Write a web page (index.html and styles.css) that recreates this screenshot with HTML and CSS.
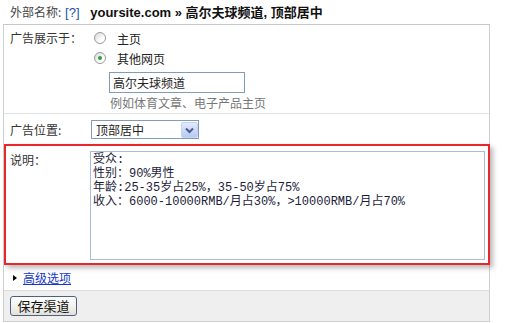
FILE: index.html
```html
<!DOCTYPE html>
<html lang="zh">
<head>
    <meta charset="UTF-8"/>
    <title>渠道设置</title>
<link rel="stylesheet" href="styles.css">
</head>
<body>
    <div class="page">
        <!-- channel name -->
        <div class="head">
            <span class="head-label">外部名称:</span>
            <a class="help" href="#">[?]</a>
            <b class="head-name">yoursite.com » 高尔夫球频道, 顶部居中</b>
        </div>

        <div class="panel">
            <!-- where the ad shows -->
            <div class="row row-show">
                <div class="label">广告展示于：</div>
                <div class="field">
                    <div class="option"><span class="radio"></span>主页</div>
                    <div class="option"><span class="radio checked"></span>其他网页</div>
                    <div class="text-box">高尔夫球频道</div>
                    <div class="hint">例如体育文章、电子产品主页</div>
                </div>
            </div>

            <!-- placement -->
            <div class="row row-place">
                <div class="label">广告位置:</div>
                <div class="field">
                    <div class="select">
                        <span class="select-text">顶部居中</span>
                        <span class="select-btn">
                            <svg width="15" height="14" viewBox="0 0 15 14"><path d="M4 5.5 L7.5 9 L11 5.5" fill="none" stroke="#4a5f8e" stroke-width="2"/></svg>
                        </span>
                    </div>
                </div>
            </div>

            <!-- description, highlighted -->
            <div class="row row-desc">
                <div class="label">说明：</div>
                <div class="textarea">受众:<br>性别：90%男性<br>年龄:25-35岁占25%，35-50岁占75%<br>收入：6000-10000RMB/月占30%，&gt;10000RMB/月占70%</div>
            </div>

            <div class="row row-more">
                <span class="arrow"></span>
                <a class="more-link" href="#">高级选项</a>
            </div>

            <div class="footer">
                <span class="button">保存渠道</span>
            </div>
        </div>
    </div>
</body>
</html>
```

FILE: styles.css
```css
* {
    margin: 0;
    padding: 0;
    box-sizing: border-box;
}

body {
    background: #fff;
    color: #333;
    font: 12px "Noto Sans CJK SC", sans-serif;
}

.page {
    width: 492px;
}

/* Header line */
.head {
    height: 24px;
    line-height: 24px;
    padding-left: 10px;
    white-space: nowrap;
}

.head-label {
    color: #444;
}

.help {
    color: #2255aa;
    text-decoration: none;
    margin-left: 1px;
    font-family: "Liberation Sans", sans-serif;
    font-size: 13px;
}

.head-name {
    margin-left: 8px;
    color: #111;
    font: bold 13px "Liberation Sans", "Noto Sans CJK SC", sans-serif;
}

/* Panel */
.panel {
    margin-left: 3px;
    width: 487px;
    border: 1px solid #cfcfcf;
    border-top-color: #c8c8c8;
}

.row {
    display: flex;
}

.label {
    width: 86px;
    padding-left: 6px;
    line-height: 20px;
    color: #333;
}

.row-show {
    padding: 3px 0 2px;
    border-bottom: 1px solid #e2e2e2;
}

.option {
    display: flex;
    align-items: center;
    height: 20px;
    color: #222;
}

/* XP-like radio */
.radio {
    width: 12px;
    height: 12px;
    margin: 0 11px 0 4px;
    border: 1px solid #9a9a9a;
    border-radius: 50%;
    background: linear-gradient(135deg, #d8d8d8, #fff 70%);
    display: flex;
    align-items: center;
    justify-content: center;
}

.radio.checked::after {
    content: "";
    width: 4px;
    height: 4px;
    border-radius: 50%;
    background: #31a03a;
}

.text-box {
    width: 136px;
    height: 21px;
    margin: 4px 0 0 19px;
    padding-left: 3px;
    border: 1px solid #7f9db9;
    line-height: 19px;
    color: #222;
}

.hint {
    margin: 2px 0 0 20px;
    line-height: 16px;
    color: #777;
}

.row-place {
    height: 30px;
    padding-top: 6px;
}

.row-place .label {
    line-height: 19px;
}

.select {
    width: 108px;
    height: 19px;
    margin-left: 1px;
    border: 1px solid #7f9db9;
    display: flex;
    align-items: center;
    justify-content: space-between;
}

.select-text {
    padding-left: 4px;
    color: #222;
}

.select-btn {
    width: 17px;
    height: 16px;
    margin-right: 0;
    border: 1px solid #c5d4f5;
    border-radius: 2px;
    background: linear-gradient(#e1e9fb, #b8caf3);
    display: flex;
    align-items: center;
    justify-content: center;
}

/* Highlighted description row */
.row-desc {
    margin-right: -1px;
    height: 121px;
    padding: 5px 3px 4px 0;
    border: 2px solid #e8262c;
    background: #fff;
    box-shadow: 3px 3px 5px rgba(0, 0, 0, 0.28);
    position: relative;
}

.row-desc .label {
    width: 84px;
    padding-left: 4px;
    line-height: 18px;
}

.textarea {
    flex: 1;
    height: 109px;
    padding: 1px 2px;
    border: 1px solid #a9bcd9;
    font: 12px "Liberation Mono", "Noto Sans CJK SC", monospace;
    line-height: 14px;
    color: #1d1d3a;
    white-space: nowrap;
}

.row-more {
    height: 26px;
    align-items: center;
    padding: 1px 0 0 9px;
    border-bottom: 1px solid #dcdcdc;
}

.arrow {
    width: 0;
    height: 0;
    border-left: 4px solid #000;
    border-top: 3.5px solid transparent;
    border-bottom: 3.5px solid transparent;
    margin-right: 6px;
}

.more-link {
    color: #1638c8;
    line-height: 16px;
}

.footer {
    height: 30px;
    padding: 5px 6px;
    background: #efefef;
}

.button {
    display: inline-block;
    width: 67px;
    height: 20px;
    border: 1px solid #4a6184;
    border-radius: 3px;
    background: linear-gradient(#fff, #f1f0ea 60%, #e3e1d6);
    text-align: center;
    line-height: 18px;
    color: #111;
    font-size: 13px;
}
```
